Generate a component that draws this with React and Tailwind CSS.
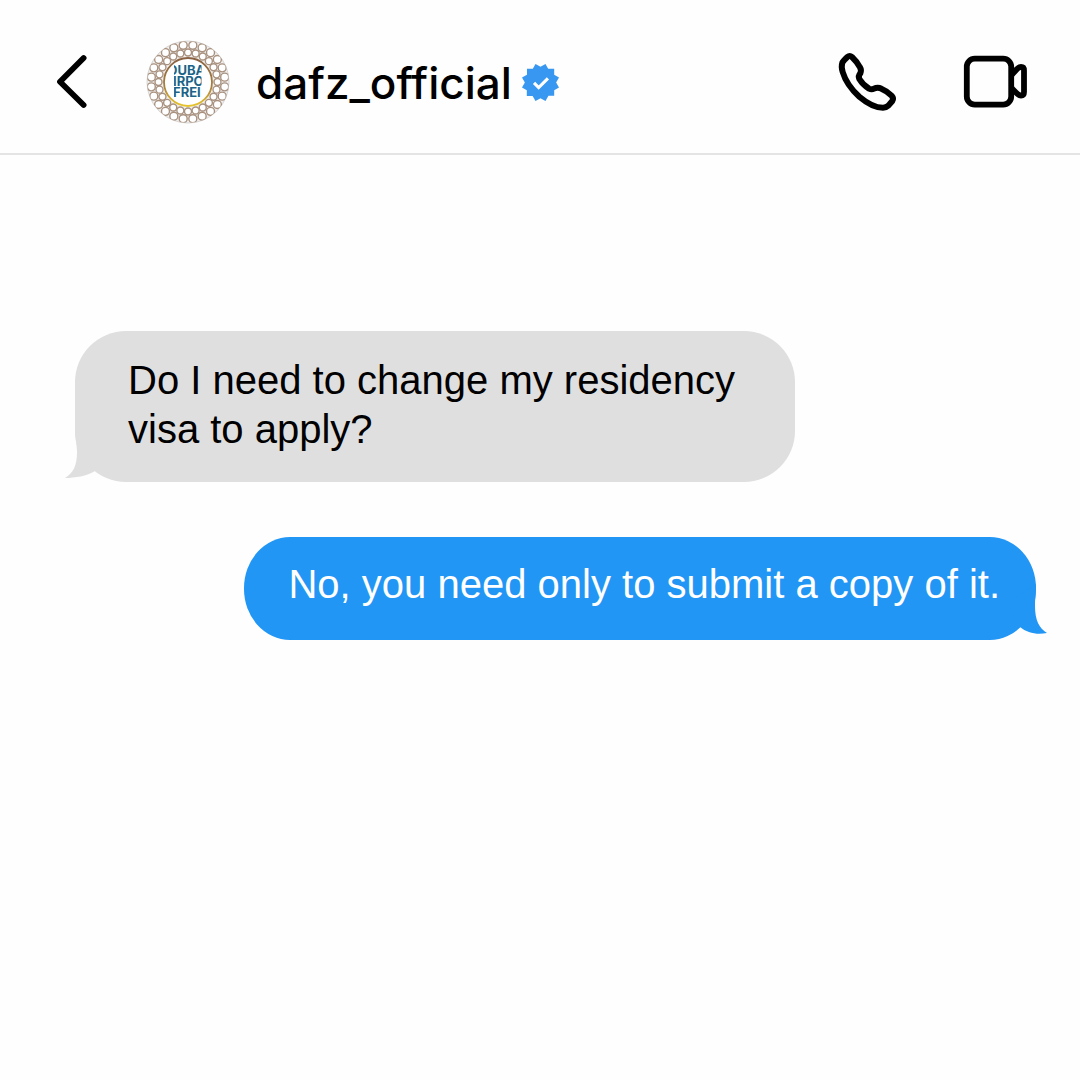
import React from "react";

// evenly spaced centres for the rings around the logo
const ringDots = (count, radius, offset) =>
  Array.from({ length: count }, (_, i) => {
    const a = ((i + offset) * 2 * Math.PI) / count;
    return { x: 42 + radius * Math.cos(a), y: 42 + radius * Math.sin(a) };
  });

const Avatar = () => (
  <svg viewBox="0 0 84 84" className="h-21 w-21 shrink-0" role="img" aria-label="dafz_official">
    <defs>
      <clipPath id="avatar-circle">
        <circle cx="42" cy="42" r="41" />
      </clipPath>
      <clipPath id="avatar-text">
        <rect x="28" y="25" width="27.5" height="34" />
      </clipPath>
      <linearGradient id="avatar-ring" x1="0" y1="0" x2="0" y2="1">
        <stop offset="0" stopColor="#8a6244" />
        <stop offset="0.6" stopColor="#a8803c" />
        <stop offset="1" stopColor="#e8c52c" />
      </linearGradient>
    </defs>
    <circle cx="42" cy="42" r="41" fill="#f1efee" stroke="#d8d6d4" strokeWidth="1" />
    <g clipPath="url(#avatar-circle)" fill="#fff" stroke="#a8917f" strokeWidth="1.4">
      {ringDots(24, 37, 0.5).map((d, i) => (
        <circle key={i} cx={d.x} cy={d.y} r="4" />
      ))}
      {ringDots(24, 29.5, 0).map((d, i) => (
        <circle key={i} cx={d.x} cy={d.y} r="3.5" />
      ))}
    </g>
    <circle cx="42" cy="42" r="24" fill="#fff" stroke="url(#avatar-ring)" strokeWidth="1.8" />
    <g
      clipPath="url(#avatar-text)"
      fill="#1b6488"
      fontSize="13"
      fontWeight="700"
      className="font-['Inter',sans-serif]"
    >
      <text x="22" y="35">DUBA</text>
      <text x="27" y="46">IRPO</text>
      <text x="27" y="57">FREI</text>
    </g>
  </svg>
);

const VerifiedBadge = () => (
  <svg viewBox="0 0 40 40" className="ml-[10px] h-[37px] w-[37px] shrink-0" role="img" aria-label="Verified">
    <path
      fill="#3897f0"
      d="M20 3.1 L14.6 0 L11.7 5.2 H5.4 V11.5 L0 14.6 L3.1 20 L0 25.4 L5.2 28.3 V34.6 H11.5 L14.6 40 L20 36.9 L25.4 40 L28.6 34.4 H34.8 V28.4 L40 25.4 L36.9 20 L40 14.6 L34.8 11.6 V5.2 H28.3 L25.4 0 Z"
    />
    <path d="M13 20.5 L18 25.5 L28 15.5" fill="none" stroke="#fff" strokeWidth="3.4" />
  </svg>
);

const Header = () => (
  <header className="flex items-center border-b-2 border-[#e4e4e4] pt-10 pr-[53px] pb-[29px] pl-12">
    <button type="button" aria-label="Back" className="shrink-0">
      <svg viewBox="0 0 48 60" className="h-15 w-12" fill="none" stroke="#000" strokeWidth="5.8" strokeLinecap="round" strokeLinejoin="round">
        <path d="M35.6 6 L12 29.8 L35.6 53" />
      </svg>
    </button>
    <div className="ml-[50px] flex items-center">
      <Avatar />
      <h1 className="ml-[26px] pt-[2px] font-['Inter',sans-serif] text-[44px] leading-[48px] font-medium text-black">dafz_official</h1>
      <VerifiedBadge />
    </div>
    <div className="ml-auto flex items-center gap-15">
      <button type="button" aria-label="Audio call">
        <svg viewBox="0 3 198 198" className="h-[66px] w-[66px]" fill="none" stroke="#000" strokeWidth="18" strokeLinejoin="round">
          <path d="M37 27 Q44 21 51 27 Q65 40 75 58 Q80 66 76 76 Q69 84 73 93 Q84 111 102 122 Q110 126 117 122 Q128 116 139 122 Q158 130 170 143 Q177 151 172 159 L160 173 Q154 179 144 179 Q112 179 73 146 Q35 112 23 72 Q18 55 22 44 Q25 38 37 27 Z" />
        </svg>
      </button>
      <button type="button" aria-label="Video call">
        <svg viewBox="0 1 66 66" className="h-[66px] w-[66px]" fill="none" stroke="#000" strokeWidth="5.8" strokeLinejoin="round">
          <rect x="5.8" y="10.6" width="44.4" height="46" rx="8" />
          <path d="M50.5 27 L56 21 Q58 19 60 19 Q63 19 63 22.5 V44 Q63 47.5 60 47.5 Q58 47.5 56 45.5 L50.5 40" />
        </svg>
      </button>
    </div>
  </header>
);

const App = () => {
  return (
    <div className="min-h-screen bg-[#fefefe] font-['Liberation_Sans',Arial,sans-serif]">
      <Header />
      <main className="flex flex-col gap-[55px] pt-44 pr-11 pb-12 pl-[75px]">
        {/* Question */}
        <div className="relative w-[720px] max-w-full self-start rounded-[51px] bg-[#dfdfdf] px-[53px] pt-[25px] pb-7 text-[40px] leading-[49px] text-black">
          <p>Do I need to change my residency visa to apply?</p>
          <svg viewBox="0 0 40 56" className="absolute bottom-0 -left-[10px] h-14 w-10" fill="#dfdfdf">
            <path d="M10 0 C10 14 12 18 12 26 C12 40 8 47 0 52 C10 52 22 50 30 45 L40 20 Z" />
          </svg>
        </div>

        {/* Answer */}
        <div className="relative self-end rounded-[46px/51px] bg-[#2196f5] pt-[23px] pr-9 pb-[31px] pl-11 text-[40px] leading-[49px] text-white">
          <p>No, you need only to submit a copy of it.</p>
          <svg viewBox="0 0 40 56" className="absolute -right-[11px] bottom-0 h-14 w-10" fill="#2196f5">
            <path d="M29 0 C29 10 28 14 28 22 C28 36 32 44 40 49 C30 51 20 49 13 43 L0 20 Z" />
          </svg>
        </div>
      </main>
    </div>
  );
};

export default App;
